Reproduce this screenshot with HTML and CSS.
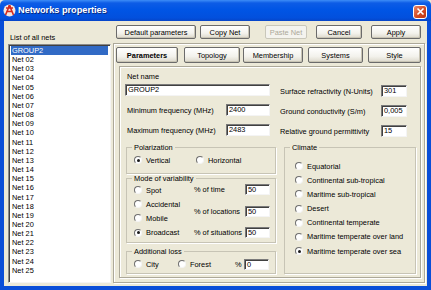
FILE: index.html
```html
<!DOCTYPE html>
<html lang="en">
<head>
    <meta charset="UTF-8">
    <title>Networks properties</title>
    <link rel="stylesheet" href="styles.css">
</head>
<body>
    <div class="window">
        <div class="titlebar">
            <svg class="appIcon" width="13" height="13" viewBox="0 0 13 13">
                <circle cx="6.5" cy="6.5" r="6" fill="#f4e6e0"/>
                <path d="M6.5 1.5 L2.5 11 M6.5 1.5 L10.5 11 M4 7.5 H9 M3 4 L10 4" stroke="#d42a1c" stroke-width="1.6" fill="none"/>
                <circle cx="6.5" cy="2.5" r="1.4" fill="#d42a1c"/>
            </svg>
            <span class="title">Networks properties</span>
            <span class="closeBtn">
                <svg width="9" height="9" viewBox="0 0 9 9"><path d="M1.5 1.5 L7.5 7.5 M7.5 1.5 L1.5 7.5" stroke="#fff" stroke-width="1.6"/></svg>
            </span>
        </div>
        <div class="client">
            <div class="netList">
                <div class="caption">List of all nets</div>
                <ul class="listBox">
                    <li class="selected">GROUP2</li>
                    <li>Net 02</li><li>Net 03</li><li>Net 04</li><li>Net 05</li>
                    <li>Net 06</li><li>Net 07</li><li>Net 08</li><li>Net 09</li>
                    <li>Net 10</li><li>Net 11</li><li>Net 12</li><li>Net 13</li>
                    <li>Net 14</li><li>Net 15</li><li>Net 16</li><li>Net 17</li>
                    <li>Net 18</li><li>Net 19</li><li>Net 20</li><li>Net 21</li>
                    <li>Net 22</li><li>Net 23</li><li>Net 24</li><li>Net 25</li>
                </ul>
            </div>

            <div class="mainSide">
                <div class="toolbar">
                    <button class="btn btnDefault">Default parameters</button>
                    <button class="btn btnCopy">Copy Net</button>
                    <button class="btn btnPaste" disabled>Paste Net</button>
                    <button class="btn btnCancel">Cancel</button>
                    <button class="btn btnApply">Apply</button>
                </div>

                <div class="frame">
                    <div class="tabs">
                        <button class="btn tab tabParams active">Parameters</button>
                        <button class="btn tab tabTopo">Topology</button>
                        <button class="btn tab tabMember">Membership</button>
                        <button class="btn tab tabSystems">Systems</button>
                        <button class="btn tab tabStyle">Style</button>
                    </div>

                    <div class="page">
                        <div class="topFields">
                            <div class="leftFields">
                                <div class="label">Net name</div>
                                <div class="edit editName">GROUP2</div>
                                <div class="fieldRow">
                                    <span>Minimum frequency (MHz)</span>
                                    <div class="edit editFreq">2400</div>
                                </div>
                                <div class="fieldRow">
                                    <span>Maximum frequency (MHz)</span>
                                    <div class="edit editFreq">2483</div>
                                </div>
                            </div>
                            <div class="rightFields">
                                <div class="fieldRow">
                                    <span>Surface refractivity (N-Units)</span>
                                    <div class="edit editSmall">301</div>
                                </div>
                                <div class="fieldRow">
                                    <span>Ground conductivity (S/m)</span>
                                    <div class="edit editSmall">0,005</div>
                                </div>
                                <div class="fieldRow">
                                    <span>Relative ground permittivity</span>
                                    <div class="edit editSmall">15</div>
                                </div>
                            </div>
                        </div>

                        <div class="groups">
                            <div class="groupCol">
                                <fieldset class="group polarization">
                                    <legend>Polarization</legend>
                                    <div class="radioLine">
                                        <label class="radio radioVertical"><span class="dot checked"></span>Vertical</label>
                                        <label class="radio"><span class="dot"></span>Horizontal</label>
                                    </div>
                                </fieldset>

                                <fieldset class="group variability">
                                    <legend>Mode of variability</legend>
                                    <div class="varBody">
                                        <div class="radioList">
                                            <label class="radio"><span class="dot"></span>Spot</label>
                                            <label class="radio"><span class="dot"></span>Accidental</label>
                                            <label class="radio"><span class="dot"></span>Mobile</label>
                                            <label class="radio"><span class="dot checked"></span>Broadcast</label>
                                        </div>
                                        <div class="percentList">
                                            <div class="percentRow"><span>% of time</span><div class="edit editPct">50</div></div>
                                            <div class="percentRow"><span>% of locations</span><div class="edit editPct">50</div></div>
                                            <div class="percentRow"><span>% of situations</span><div class="edit editPct">50</div></div>
                                        </div>
                                    </div>
                                </fieldset>

                                <fieldset class="group addLoss">
                                    <legend>Additional loss</legend>
                                    <div class="radioLine">
                                        <label class="radio radioCity"><span class="dot"></span>City</label>
                                        <label class="radio radioForest"><span class="dot"></span>Forest</label>
                                        <span class="pctSign">%</span>
                                        <div class="edit editPct">0</div>
                                    </div>
                                </fieldset>
                            </div>

                            <fieldset class="group climate">
                                <legend>Climate</legend>
                                <div class="radioList climateList">
                                    <label class="radio"><span class="dot"></span>Equatorial</label>
                                    <label class="radio"><span class="dot"></span>Continental sub-tropical</label>
                                    <label class="radio"><span class="dot"></span>Maritime sub-tropical</label>
                                    <label class="radio"><span class="dot"></span>Desert</label>
                                    <label class="radio"><span class="dot"></span>Continental temperate</label>
                                    <label class="radio"><span class="dot"></span>Maritime temperate over land</label>
                                    <label class="radio"><span class="dot checked"></span>Maritime temperate over sea</label>
                                </div>
                            </fieldset>
                        </div>
                    </div>
                </div>
            </div>
        </div>
    </div>
</body>
</html>
```

FILE: styles.css
```css
*{
    margin: 0;
    padding: 0;
    box-sizing: border-box;
}
html, body{
    width: 431px;
    height: 290px;
    overflow: hidden;
    background: #ece9d8;
}
body{
    font-family: "Liberation Sans", Arial, sans-serif;
    font-size: 7.4px;
    line-height: 9px;
    color: #000;
}
.window{
    width: 431px;
    height: 290px;
    display: flex;
    flex-direction: column;
}

/* title bar */
.titlebar{
    height: 21px;
    display: flex;
    align-items: center;
    padding: 0 4px 0 3px;
    background: linear-gradient(#3d8df7 0, #0d5ce6 3px, #0055e5 45%, #0250dd 85%, #0645c8 100%);
    border-radius: 5px 5px 0 0;
}
.appIcon{
    margin-right: 2px;
}
.title{
    font-weight: bold;
    font-size: 9.2px;
    color: #fff;
    text-shadow: 1px 1px #0a2a80;
    flex: 1;
}
.closeBtn{
    width: 14px;
    height: 14px;
    margin-top: 2px;
    display: flex;
    align-items: center;
    justify-content: center;
    border: 1px solid #fff;
    border-radius: 3px;
    background: linear-gradient(135deg, #e8866a, #d24a24 55%, #b83210);
}

/* client */
.client{
    flex: 1;
    display: flex;
    border: 4px solid #0a4ed8;
    border-top: none;
    background: #ece9d8;
}
.netList{
    width: 109px;
    padding-left: 4px;
}
.caption{
    margin-top: 12px;
    margin-left: 2px;
}
.listBox{
    list-style: none;
    margin-top: 2px;
    width: 103px;
    height: 239px;
    background: #fff;
    border: 1px solid;
    border-color: #8a8a8a #f4f4f4 #f4f4f4 #8a8a8a;
    box-shadow: inset 1px 1px 0 #404040;
    padding: 1px 2px 0 2px;
}
.listBox li{
    height: 9.17px;
    line-height: 9.17px;
    padding-left: 1px;
}
.listBox li.selected{
    background: #316ac5;
    color: #fff;
}

.mainSide{
    flex: 1;
    display: flex;
    flex-direction: column;
}

/* buttons */
.btn{
    font-family: inherit;
    font-size: 7.4px;
    height: 14px;
    color: #000;
    border: 1px solid #6b6b6b;
    border-radius: 2px;
    background: linear-gradient(#ffffff, #f3f2ec 60%, #dcd8cb);
    box-shadow: inset -1px -1px 0 #c9c5b5;
}
.btn:disabled{
    color: #aca899;
    border-color: #c9c7ba;
    background: #f4f3ee;
    box-shadow: none;
}
.toolbar{
    display: flex;
    margin-top: 4px;
}
.btnDefault{ margin-left: 3px; width: 80px; }
.btnCopy{ margin-left: 4px; width: 50px; }
.btnPaste{ margin-left: 15px; width: 42px; }
.btnCancel{ margin-left: 9px; width: 46px; }
.btnApply{ margin-left: 9px; width: 50px; }

.frame{
    margin-top: 4px;
    width: 312px;
    height: 240px;
    border: 1px solid #aca899;
    box-shadow: inset 1px 1px 0 #fff, 1px 1px 0 #fff;
    display: flex;
    flex-direction: column;
}
.tabs{
    display: flex;
    margin-top: 3px;
}
.tab{
    height: 16px;
}
.tab.active{
    font-weight: bold;
}
.tabParams{ margin-left: 2px; width: 62px; }
.tabTopo{ margin-left: 6px; width: 56px; }
.tabMember{ margin-left: 3px; width: 60px; }
.tabSystems{ margin-left: 5px; width: 55px; }
.tabStyle{ margin-left: 5px; width: 53px; }

.page{
    margin: 3px 0 0 5px;
    width: 302px;
    height: 212px;
    border: 1px solid #aca899;
    box-shadow: inset 1px 1px 0 #fff, 1px 1px 0 #fff;
    padding: 5px 0 0 6px;
}

/* edits */
.edit{
    height: 12px;
    line-height: 10px;
    padding-left: 2px;
    background: #fff;
    border: 1px solid;
    border-color: #7a7a7a #f4f4f4 #f4f4f4 #7a7a7a;
    box-shadow: inset 1px 1px 0 #404040;
}
.topFields{
    display: flex;
    gap: 4px;
}
.leftFields{
    width: 150px;
}
.label{
    margin-left: 1px;
}
.editName{
    margin-top: 3px;
    margin-left: -1px;
    width: 145px;
}
.editFreq{
    width: 44px;
    margin-right: 6px;
}
.fieldRow{
    display: flex;
    align-items: center;
    justify-content: space-between;
    margin-top: 8px;
    height: 12px;
}
.leftFields .fieldRow span{
    margin-left: 1px;
}
.rightFields{
    width: 136px;
    padding-top: 5px;
}
.editSmall{
    width: 26px;
    margin-right: 9px;
}

/* group boxes */
.groups{
    display: flex;
    gap: 8px;
    margin-top: 6px;
}
.groupCol{
    width: 150px;
    display: flex;
    flex-direction: column;
}
.group{
    border: 1px solid #c7c4b5;
    box-shadow: 1px 1px 0 #fff;
    padding: 0 0 0 7px;
    min-width: 0;
}
.group legend{
    margin-left: -2px;
    padding: 0 2px;
    line-height: 9px;
}
.polarization{
    height: 31px;
}
.variability{
    height: 69px;
}
.addLoss{
    height: 27px;
    margin-top: 4px;
}
.climate{
    width: 132px;
    height: 131px;
}
.radioLine{
    display: flex;
    align-items: center;
    height: 10px;
    margin-top: 3px;
}
.radio{
    display: flex;
    align-items: center;
    height: 10px;
}
.dot{
    width: 8px;
    height: 8px;
    margin-right: 4px;
    border-radius: 50%;
    border: 1px solid;
    border-color: #6e6e6e #f4f4f4 #f4f4f4 #6e6e6e;
    background: #fff;
    display: flex;
    align-items: center;
    justify-content: center;
}
.dot.checked::after{
    content: "";
    width: 3px;
    height: 3px;
    border-radius: 50%;
    background: #1a1a1a;
}
.radioVertical{ width: 62px; }
.radioCity{ width: 44px; }
.radioForest{ width: 57px; }
.pctSign{
    width: 9px;
}
.varBody{
    display: flex;
}
.radioList{
    display: flex;
    flex-direction: column;
}
.varBody .radioList{
    width: 60px;
}
.varBody .radioList .radio{
    height: 14.2px;
}
.percentList{
    display: flex;
    flex-direction: column;
    justify-content: space-between;
    height: 56px;
    padding: 1px 0;
}
.percentRow{
    display: flex;
    align-items: center;
    justify-content: space-between;
    width: 76px;
}
.editPct{
    width: 25px;
    height: 11px;
    line-height: 9px;
}
.addLoss .editPct{
    margin-left: 0;
}
.climateList{
    margin-top: 7px;
    padding-left: 3px;
}
.climateList .radio{
    height: 14.17px;
}
```
